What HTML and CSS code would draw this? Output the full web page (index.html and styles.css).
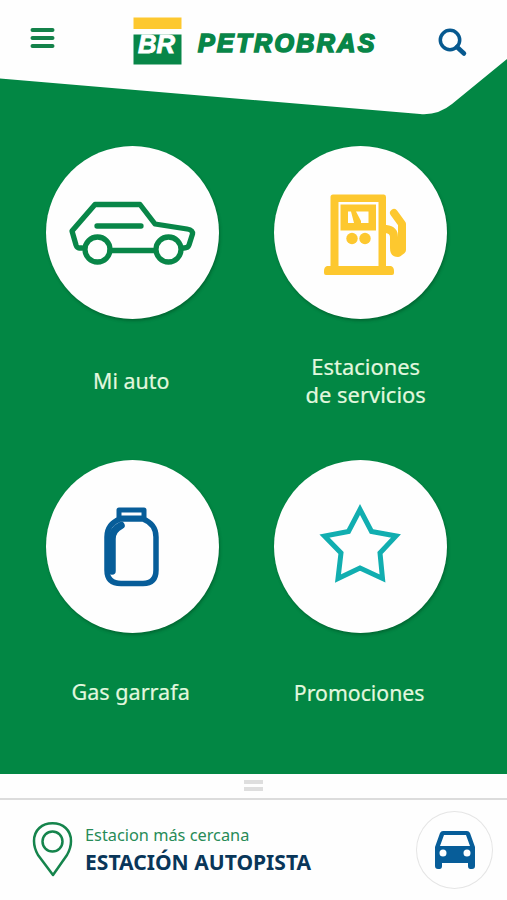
FILE: index.html
```html
<!DOCTYPE html>
<html lang="es">
<head>
<meta charset="utf-8">
<meta name="viewport" content="width=device-width, initial-scale=1">
<title>Petrobras</title>
<link rel="stylesheet" href="styles.css">
</head>
<body>
<div class="app">
  <header class="header">
    <svg class="header-shape" viewBox="0 0 507 120" aria-hidden="true"><path d="M0 0H507V59L452 104Q438 115.500 420 114L0 78.500Z" fill="#fefefe"/></svg>
    <svg class="menu" viewBox="0 0 26 24" stroke="#14824a" stroke-width="4" stroke-linecap="round"><path d="M2.500 4H22.500M2.500 12H22.500M2.500 20H22.500"/></svg>
    <svg class="brand" viewBox="0 0 246 50">
      <path d="M.500.500H48.500V12H.500Z" fill="#fdc82f"/>
      <path d="M.500 17.500H48.500V47.500H.500Z" fill="#088648"/>
      <text class="logo-initials" x="5" y="35.500" textLength="37" lengthAdjust="spacingAndGlyphs">BR</text>
      <text class="logo-name" x="65" y="35.300" textLength="176.500" lengthAdjust="spacing">PETROBRAS</text>
    </svg>
    <svg class="search" viewBox="0 0 30 30" fill="none" stroke="#07598f"><circle cx="12" cy="12" r="9.700" stroke-width="3.500"/><path d="M19 19L26 25.500" stroke-width="4.500" stroke-linecap="round"/></svg>
  </header>
  <main class="grid">
    <a class="tile">
      <span class="disc">
        <svg viewBox="0 0 173 173" fill="none" stroke="#088648" stroke-width="5.300" stroke-linejoin="round" stroke-linecap="round">
          <path d="M36 102H33Q31 102 30 99L26 85L49 58.500H94L109 78L141 83Q147 84 146.500 88L143 99Q142 102 138 102H136M64 104.500H109"/>
          <path d="M51 80H95"/>
          <circle cx="51.500" cy="103.500" r="12.500"/><circle cx="122.500" cy="103.500" r="12.500"/>
        </svg>
      </span>
      <span class="label"><span class="auto">Mi auto</span></span>
    </a>
    <a class="tile">
      <span class="disc">
        <svg viewBox="0 0 173 173" fill="#fdc82f">
          <path fill-rule="evenodd" d="M59 48.500H110Q112 48.500 112 51V120H117Q120 121 120 125V127Q120 129 118 129H52Q50 129 50 127V125Q50 121 53 120H56.500V51Q56.500 48.500 59 48.500ZM64.500 56V120H104.500V56Z"/>
          <path fill-rule="evenodd" d="M66.500 58.500H102V84.500H66.500ZM74 65.500V77H80L77 65.500ZM82 65.500L87 75V77H94.500V65.500Z"/>
          <circle cx="78" cy="92.500" r="5.700"/><circle cx="91" cy="92.500" r="5.700"/>
          <path d="M112 83Q120 84 120 91V102Q120 107 124 107L128 104V78L120 67" fill="none" stroke="#fdc82f" stroke-width="8" stroke-linecap="round" stroke-linejoin="round"/>
        </svg>
      </span>
      <span class="label"><span class="stations">Estaciones<br>de servicios</span></span>
    </a>
    <a class="tile">
      <span class="disc">
        <svg viewBox="0 0 173 173" fill="none" stroke="#075d99" stroke-width="5.500" stroke-linejoin="round">
          <path d="M73 58V50H98V58Z" stroke-width="5"/>
          <path d="M74 59H97Q110 64 110 77V110Q110 123.500 97 123.500H75Q61 123.500 61 110V77Q61 64 74 59Z"/>
          <path d="M75 65.500Q66 70 66 79V111" stroke-width="7.500" stroke-linecap="round"/>
        </svg>
      </span>
      <span class="label"><span class="gas">Gas garrafa</span></span>
    </a>
    <a class="tile">
      <span class="disc">
        <svg viewBox="0 0 173 173" fill="none" stroke="#11aeb0" stroke-width="5"><path d="M86 49.500L97.500 71.500L122 76L106 93L108.500 118.500L86 108L64 118.500L67 93L50.500 76L74.500 71.500Z"/></svg>
      </span>
      <span class="label"><span class="promo">Promociones</span></span>
    </a>
  </main>
  <div class="handle"><span class="grip"></span></div>
  <footer class="nearest">
    <svg class="pin" viewBox="0 0 42 58" fill="none" stroke="#15844c" stroke-width="2.500"><path d="M21 54L6 34Q2 27 2 20C2 9 10 2.200 20.500 2.200S39 9 39 20Q39 27 35 34Z" stroke-linejoin="round"/><circle cx="20.500" cy="20.500" r="10"/></svg>
    <div class="station">
      <div class="caption">Estacion más cercana</div>
      <div class="name">ESTACIÓN AUTOPISTA</div>
    </div>
    <div class="drive">
      <svg viewBox="0 0 40 38"><path fill="#075d99" fill-rule="evenodd" d="M8 0H32Q34 0 35 2L40 16V35Q40 38 37 38H35.500Q33 38 33 35V32H7V35Q7 38 4.500 38H3Q0 38 0 35V16L5 2Q6 0 8 0ZM9 4L5 15H35L31 4ZM8 18.500A3.500 3.500 0 1 0 8 25.500A3.500 3.500 0 1 0 8 18.500ZM32 18.500A3.500 3.500 0 1 0 32 25.500A3.500 3.500 0 1 0 32 18.500Z"/></svg>
    </div>
  </footer>
</div>
</body>
</html>
```
FILE: styles.css
```css
* { box-sizing: border-box; }
body { margin: 0; }
svg { display: block; }
.app {
  width: 507px;
  height: 900px;
  overflow: hidden;
  display: flex;
  flex-direction: column;
  background: #028744;
  font-family: "Noto Sans", sans-serif;
}
.header {
  position: relative;
  flex: none;
  height: 146px;
  display: flex;
  align-items: flex-start;
  padding: 17px 39px 0 30px;
}
.header-shape { position: absolute; left: 0; top: 0; width: 507px; height: 120px; }
.menu { position: relative; width: 26px; height: 24px; margin-top: 9px; }
.brand { position: relative; width: 246px; height: 50px; margin-left: 77px; }
.search { position: relative; width: 30px; height: 30px; margin: 11px 0 0 auto; }
.logo-initials, .logo-name {
  font-family: "Liberation Sans", sans-serif;
  font-weight: bold;
  font-style: italic;
}
.logo-initials { font-size: 25px; fill: #fff; stroke: #fff; stroke-width: 0.9px; }
.logo-name { font-size: 25px; fill: #088648; stroke: #088648; stroke-width: 1.7px; }
.grid {
  flex: none;
  height: 628px;
  padding-left: 18px;
  display: grid;
  grid-template-columns: 228px 228px;
  grid-template-rows: 314px 314px;
}
.tile { display: flex; flex-direction: column; align-items: center; }
.disc {
  width: 173px;
  height: 173px;
  border-radius: 50%;
  background: #fefefe;
  box-shadow: 1px 2px 3px rgba(0, 50, 20, 0.35);
}
.label {
  height: 56px;
  margin-top: 35px;
  display: flex;
  align-items: center;
  text-align: center;
  white-space: nowrap;
  color: #e2f8df;
  font-size: 22.5px;
  line-height: 28px;
  -webkit-text-stroke: 0.2px #e2f8df;
}
.auto { transform: translate(-1px, -1px) scaleX(0.95); }
.stations { transform: translate(6px, -1px) scaleX(0.975); }
.gas { transform: translate(-1px, -4px) scaleX(0.96); }
.promo { transform: translate(-1px, -3px) scaleX(0.945); }
.handle {
  flex: none;
  height: 26px;
  display: flex;
  justify-content: center;
  padding-top: 6px;
  background: #fefefe;
  border-bottom: 2px solid #dcdcdc;
}
.grip { width: 19px; height: 11px; border: solid #dedede; border-width: 4px 0; }
.nearest {
  flex: 1;
  display: flex;
  align-items: center;
  padding: 0 14px 0 32px;
  background: #fefefe;
}
.pin { width: 42px; height: 58px; }
.station { margin-left: 11px; white-space: nowrap; }
.caption, .name { transform-origin: left center; }
.caption { font-size: 17px; line-height: 24px; color: #278b57; transform: translateY(-1px) scaleX(0.96); }
.name {
  font-size: 22px;
  line-height: 28px;
  font-weight: 700;
  color: #093659;
  transform: translateY(-1px) scaleX(0.957);
}
.drive {
  width: 77px;
  height: 78px;
  margin-left: auto;
  display: grid;
  place-items: center;
  border: 1px solid #e5e5e5;
  border-radius: 50%;
}
.drive svg { width: 40px; height: 38px; }
```
